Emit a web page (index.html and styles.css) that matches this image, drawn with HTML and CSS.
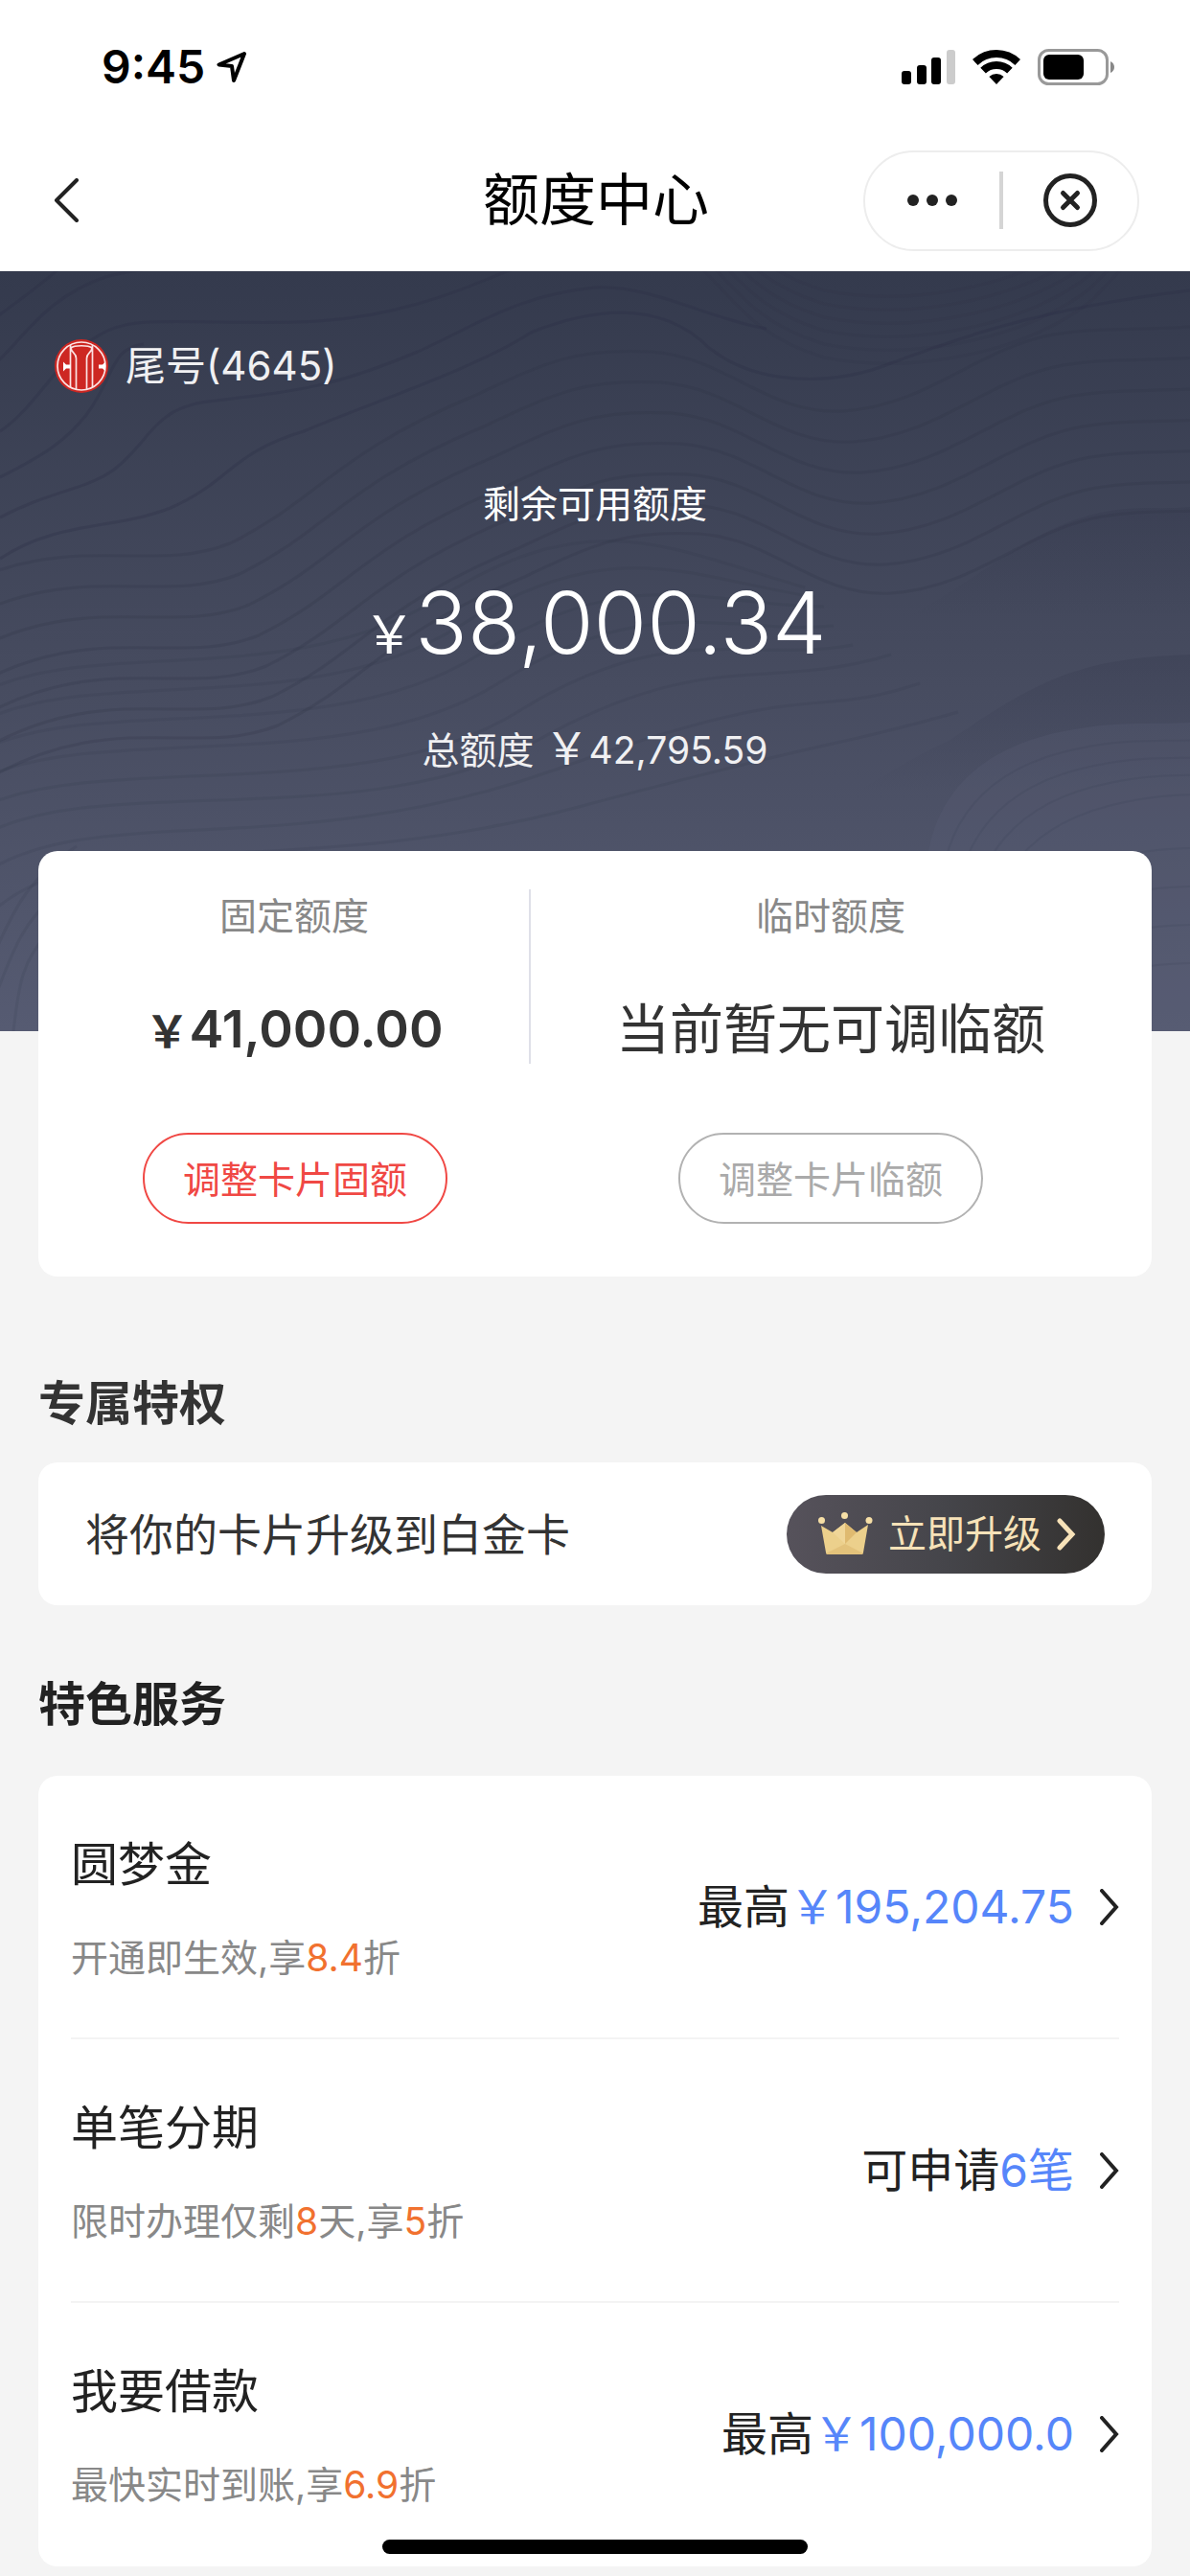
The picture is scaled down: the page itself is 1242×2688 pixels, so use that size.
FILE: index.html
```html
<!DOCTYPE html>
<html lang="zh-CN">
<head>
<meta charset="utf-8">
<meta name="viewport" content="width=device-width, initial-scale=1">
<title>额度中心</title>
<link rel="stylesheet" href="styles.css">
</head>
<body>
<header class="top">
  <div class="status">
    <div class="status-left">
      <span class="time">9:45</span>
      <svg class="arrow" viewBox="0 0 32 34" width="32" height="34" aria-hidden="true"><path d="M29 3 2.500 14.500 16 16 18 31Z" fill="none" stroke="#000" stroke-width="4" stroke-linejoin="round"/></svg>
    </div>
    <svg viewBox="0 0 222 38" width="222" height="38" aria-hidden="true">
      <rect x="0" y="23" width="10" height="14" rx="3"/>
      <rect x="16" y="17" width="10" height="20" rx="3"/>
      <rect x="31" y="9" width="10" height="28" rx="3"/>
      <rect x="47" y="1" width="9" height="36" rx="3" fill="#ccc"/>
      <path d="M76.800 14A32 32 0 0 1 121.200 14" fill="none" stroke="#000" stroke-width="8"/>
      <path d="M85.100 22.600A20 20 0 0 1 112.900 22.600" fill="none" stroke="#000" stroke-width="8"/>
      <path d="M99 37 91.400 29.100A11 11 0 0 1 106.600 29.100Z"/>
      <rect x="143.500" y="1.500" width="71" height="35" rx="10" fill="none" stroke="#999" stroke-width="3"/>
      <rect x="148" y="6" width="42" height="26" rx="6"/>
      <path d="M218 13Q222 15 222 19T218 25Z" fill="#888"/>
    </svg>
  </div>
  <nav class="nav">
    <button class="icon-btn back" aria-label="返回"><svg viewBox="0 0 28 46" width="28" height="46"><path d="M25 2 4 23 25 44" fill="none" stroke="#222" stroke-width="4" stroke-linecap="round" stroke-linejoin="round"/></svg></button>
    <h1 class="title">额度中心</h1>
    <div class="capsule">
      <button class="icon-btn" aria-label="更多"><svg viewBox="0 0 52 12" width="52" height="12" fill="#222"><circle cx="6" cy="6" r="6"/><circle cx="26" cy="6" r="6"/><circle cx="46" cy="6" r="6"/></svg></button>
      <span class="capsule-line"></span>
      <button class="icon-btn" aria-label="关闭"><svg viewBox="0 0 56 56" width="56" height="56" fill="none" stroke="#222" stroke-linecap="round"><circle cx="28" cy="28" r="25.500" stroke-width="5"/><path d="M20.500 20.500 35.500 35.500M35.500 20.500 20.500 35.500" stroke-width="5"/></svg></button>
    </div>
  </nav>
</header>

<main>
  <section class="hero">
    <svg class="waves" viewBox="0 0 1242 793" preserveAspectRatio="none" aria-hidden="true">
      <defs>
        <linearGradient id="ridge" x1="0" y1="0" x2="0" y2="1"><stop offset="0" stop-color="#2f3348" stop-opacity=".22"/><stop offset=".6" stop-color="#2f3348" stop-opacity="0"/></linearGradient>
        <path id="swell" d="M-80 350C60 260 150 320 240 284C330 240 350 190 495 130C570 95 600 80 680 84C760 90 800 150 880 146C970 140 1020 80 1100 66C1160 56 1200 66 1322 50"/>
        <path id="bowl" d="M680 -40C760 0 760 60 860 90C960 110 1080 80 1140 30C1170 0 1200 -40 1240 -60"/>
        <path id="dune" d="M966 640C966 560 1010 500 1110 480C1170 468 1200 474 1260 470"/>
      </defs>
      <g fill="none" stroke="#2c3045" stroke-opacity=".3" stroke-width="3">
        <path d="M-20 60C20 30 50 10 80 -20"/>
        <path d="M-20 110C20 80 40 30 110 6C160 -8 220 -4 300 -10"/>
        <path d="M0 167C40 140 60 90 103 67C130 50 158 52 230 53C300 54 360 56 436 34C500 16 520 0 560 -10"/>
        <path d="M0 215C50 190 70 175 90 150C120 110 115 80 150 76"/>
        <path d="M0 257C50 230 90 228 119 207C160 175 160 140 226 135C317 124 350 120 436 84C500 55 540 25 621 17C680 14 740 50 800 60"/>
        <path d="M0 300C60 260 120 270 178 247C240 220 240 190 317 167C380 140 500 100 554 64C640 30 700 40 740 80C790 120 870 120 930 96C1000 70 1080 40 1242 20"/>
      </g>
      <g fill="none" stroke="#2c3045" stroke-opacity=".22" stroke-width="3">
        <use href="#swell"/><use href="#swell" x="10" y="32"/><use href="#swell" x="20" y="64"/><use href="#swell" x="30" y="96"/><use href="#swell" x="38" y="128"/><use href="#swell" x="44" y="160"/><use href="#swell" x="50" y="190"/>
      </g>
      <g fill="none" stroke="#2c3045" stroke-opacity=".13" stroke-width="3">
        <use href="#bowl"/><use href="#bowl" y="-14"/><use href="#bowl" y="-28"/><use href="#bowl" y="-42"/><use href="#bowl" y="-56"/><use href="#bowl" y="-70"/>
      </g>
      <g fill="none" stroke="#2c3045" stroke-opacity=".12" stroke-width="3">
        <path d="M-20 440C100 380 300 440 460 340S700 290 840 330"/>
        <path d="M-20 470C100 410 320 470 480 370S720 320 850 340"/>
        <path d="M-20 500C100 440 340 500 500 400S740 350 860 350"/>
        <path d="M-20 530C100 470 360 530 520 430S760 380 870 370"/>
        <path d="M-20 560C100 500 380 560 540 460S780 410 890 390"/>
        <path d="M-20 590C100 520 380 590 560 490S800 440 930 400"/>
        <path d="M-20 630C100 550 300 620 580 520S840 470 960 430"/>
        <path d="M-20 680C80 570 300 640 600 560S860 500 1000 460"/>
        <path d="M-10 720C10 680 20 640 80 600M-10 770C10 720 20 680 60 650M14 793C20 740 24 720 50 690"/>
      </g>
      <path d="M760 420C960 390 1020 300 1110 264C1170 240 1200 250 1242 246V440H760Z" fill="url(#ridge)"/>
      <path d="M640 620C860 590 900 530 990 490C1080 430 1120 404 1242 400V640H640Z" fill="url(#ridge)"/>
      <path d="M966 640C966 560 1010 500 1110 480C1170 468 1200 474 1260 470V793H966Z" fill="#5a5f77" fill-opacity=".25"/>
      <g fill="none" stroke="#2c3045" stroke-opacity=".1" stroke-width="2">
        <use href="#dune" x="16" y="18"/><use href="#dune" x="32" y="36"/><use href="#dune" x="48" y="54"/><use href="#dune" x="64" y="74"/><use href="#dune" y="130" x="60"/><use href="#dune" y="170" x="60"/><use href="#dune" y="210" x="60"/><use href="#dune" y="250" x="60"/>
      </g>
    </svg>
    <div class="account">
      <svg viewBox="0 0 56 56" width="56" height="56" aria-hidden="true">
        <circle cx="28" cy="28" r="28" fill="#cd2722"/>
        <g fill="none" stroke="#fbe3e3" stroke-width="1.700">
          <circle cx="28" cy="28" r="25"/>
          <path d="M16.500 6V50M39.500 6V50M22.500 52V20C22.500 14 17 14 17 9M33.500 52V20C33.500 14 39 14 39 9M17 9C21 6 35 6 39 9"/>
        </g>
        <path d="M9 23.500 12 26.500H16.500V30.500H12L9 33.500ZM53 23.500 50 26.500H46V30.500H50L53 33.500Z" fill="#fff"/>
      </svg>
      <span>尾号(4645)</span>
    </div>
    <p class="hero-label">剩余可用额度</p>
    <p class="hero-amount"><span class="yen hero-yen">￥</span>38,000.34</p>
    <p class="hero-total">总额度 <span class="yen">￥</span>42,795.59</p>
  </section>

  <section class="card limits">
    <div class="limit fixed-limit">
      <div class="limit-info">
        <h2 class="limit-label">固定额度</h2>
        <p class="limit-value strong"><span class="yen">￥</span>41,000.00</p>
      </div>
      <button class="adjust">调整卡片固额</button>
    </div>
    <div class="limit temp-limit">
      <div class="limit-info">
        <h2 class="limit-label">临时额度</h2>
        <p class="limit-value">当前暂无可调临额</p>
      </div>
      <button class="adjust muted">调整卡片临额</button>
    </div>
  </section>

  <h2 class="heading">专属特权</h2>
  <section class="card upgrade">
    <p class="upgrade-text">将你的卡片升级到白金卡</p>
    <button class="pill">
      <svg viewBox="0 0 57 46" width="57" height="46" aria-hidden="true">
        <g fill="#f6dfa6"><circle cx="3.500" cy="8.500" r="3.500"/><circle cx="27.500" cy="3.500" r="3.500"/><circle cx="53" cy="8.500" r="3.500"/></g>
        <path d="M3 14 15 21 28 11 40 21 52 13 47 42Q47 44 45 44H10Q8 44 8 42Z" fill="#ecd08c"/>
        <path d="M28 11V33L15 21Z" fill="#f0d698"/><path d="M28 11 40 21 28 33Z" fill="#dfba70"/><path d="M8 43 28 33 47 43 45 44H10Z" fill="#e3c27b"/>
      </svg>
      <span>立即升级</span>
      <svg class="pill-chevron" viewBox="0 0 20 34" width="20" height="34" aria-hidden="true"><path d="M3 3 16 17 3 31" fill="none" stroke="#f7e2b8" stroke-width="5" stroke-linecap="round"/></svg>
    </button>
  </section>

  <h2 class="heading services-heading">特色服务</h2>
  <section class="card services">
    <a class="service" href="#dream">
      <span class="service-main"><span class="service-name">圆梦金</span><span class="service-note">开通即生效,享<em>8.4</em>折</span></span>
      <span class="service-value">最高<b>￥195,204.75</b></span>
      <svg viewBox="0 0 20 38" width="20" height="38" aria-hidden="true"><path d="M2 2 17 19 2 36" fill="none" stroke="#222" stroke-width="4" stroke-linecap="round"/></svg>
    </a>
    <a class="service" href="#instalment">
      <span class="service-main"><span class="service-name">单笔分期</span><span class="service-note">限时办理仅剩<em>8</em>天,享<em>5</em>折</span></span>
      <span class="service-value">可申请<b>6笔</b></span>
      <svg viewBox="0 0 20 38" width="20" height="38" aria-hidden="true"><path d="M2 2 17 19 2 36" fill="none" stroke="#222" stroke-width="4" stroke-linecap="round"/></svg>
    </a>
    <a class="service" href="#loan">
      <span class="service-main"><span class="service-name">我要借款</span><span class="service-note">最快实时到账,享<em>6.9</em>折</span></span>
      <span class="service-value">最高<b>￥100,000.0</b></span>
      <svg viewBox="0 0 20 38" width="20" height="38" aria-hidden="true"><path d="M2 2 17 19 2 36" fill="none" stroke="#222" stroke-width="4" stroke-linecap="round"/></svg>
    </a>
  </section>
</main>
<div class="home-bar"></div>
</body>
</html>
```
FILE: styles.css
```css
* { box-sizing: border-box; }

body {
  margin: 0;
  background: #f4f4f4;
  color: #222;
  font-family: Inter, "Noto Sans CJK SC", sans-serif;
  font-size: 39px;
}

h1, h2, p { margin: 0; font-weight: 400; }

button {
  font: inherit;
  color: inherit;
  padding: 0;
  border: 0;
  background: none;
}

svg { display: block; flex: none; }

.top { background: #fff; }

.status {
  display: flex;
  justify-content: space-between;
  align-items: center;
  height: 140px;
  padding: 0 79px 0 106px;
}

.status-left { display: flex; align-items: center; gap: 12px; }
.time { font-size: 48px; font-weight: 600; line-height: 56px; color: #000; }

.nav {
  display: grid;
  grid-template-columns: 1fr auto 1fr;
  align-items: center;
  height: 143px;
  padding: 0 53px 5px 55px;
}

.icon-btn { display: flex; align-items: center; justify-content: center; }
.back { justify-self: start; height: 96px; }
.title { font-size: 59px; line-height: 80px; color: #000; }

.capsule {
  justify-self: end;
  display: grid;
  grid-template-columns: 1fr 4px 1fr;
  align-items: center;
  width: 288px;
  height: 105px;
  border: 2px solid #ededed;
  border-radius: 53px;
}

.capsule-line { height: 60px; background: #d5d5d5; }

.hero {
  position: relative;
  padding: 66px 57px 265px;
  background: linear-gradient(#343a4d, #474c60 55%, #565b72);
  color: #fff;
  text-align: center;
}

.waves { position: absolute; inset: 0; width: 100%; height: 100%; }

.account, .hero-label, .hero-amount, .hero-total { position: relative; }

.account {
  display: flex;
  align-items: center;
  gap: 18px;
  font-size: 42px;
  line-height: 66px;
  color: #f0f0f2;
}

.hero-label { margin-top: 83px; line-height: 56px; }
.hero-amount { margin-top: 41px; font-size: 90px; font-weight: 300; line-height: 110px; }
.hero-total { margin-top: 50px; line-height: 56px; color: #f0f0f2; }

.yen { font-size: 46px; line-height: 0; }
.hero-yen { font-size: 54px; font-weight: 400; }

.card {
  margin: 0 40px;
  background: #fff;
  border-radius: 20px;
}

.limits {
  position: relative;
  display: grid;
  grid-template-columns: 44fr 56fr;
  margin-top: -188px;
  padding: 40px 22px 55px;
}

.limit { display: flex; flex-direction: column; align-items: center; gap: 72px; }
.limit-info { width: 100%; text-align: center; }
.fixed-limit .limit-info { border-right: 2px solid #dfe0e8; }
.limit-label { font-size: 39px; line-height: 56px; color: #888; }
.limit-value { margin-top: 54px; font-size: 56px; line-height: 72px; color: #333; }
.strong { font-size: 54px; font-weight: 600; }

.adjust {
  width: 318px;
  height: 95px;
  padding-bottom: 4px;
  border: 2px solid #f04844;
  border-radius: 48px;
  color: #f04844;
}

.muted { border-color: #b2b2b2; color: #aaa; }

.heading {
  margin: 98px 40px 26px;
  font-size: 49px;
  font-weight: 700;
  line-height: 70px;
  color: #333;
}

.upgrade {
  display: flex;
  align-items: center;
  justify-content: space-between;
  height: 149px;
  padding: 0 49px;
}

.upgrade-text { font-size: 46px; line-height: 64px; color: #333; }

.pill {
  display: flex;
  align-items: center;
  width: 332px;
  height: 82px;
  padding: 0 30px 0 33px;
  border-radius: 41px;
  background: linear-gradient(90deg, #56525b, #45454a 50%, #33312f);
  color: #f7e2b8;
  font-size: 40px;
  line-height: 56px;
}

.pill span { margin-left: 16px; }
.pill-chevron { margin-left: auto; }

.services-heading { margin: 69px 40px 39px; color: #222; }
.services { padding: 0 34px; }

.service {
  display: flex;
  align-items: center;
  height: 275px;
  border-bottom: 2px solid #f3f3f3;
  color: #222;
  text-decoration: none;
}

.service:last-child { border-bottom-color: transparent; }
.service-main { display: grid; gap: 34px; margin-right: auto; padding-top: 2px; }
.service-name { font-size: 49px; line-height: 70px; }
.service-note { font-size: 39px; line-height: 56px; color: #888; }
.service-note em { font-style: normal; color: #f1712f; }
.service-value { margin-right: 27px; font-size: 48px; line-height: 70px; }
.service-value b { font-weight: 400; color: #5686fa; }

.home-bar {
  position: fixed;
  bottom: 23px;
  left: 50%;
  width: 444px;
  height: 15px;
  margin-left: -222px;
  border-radius: 8px;
  background: #000;
}
```
